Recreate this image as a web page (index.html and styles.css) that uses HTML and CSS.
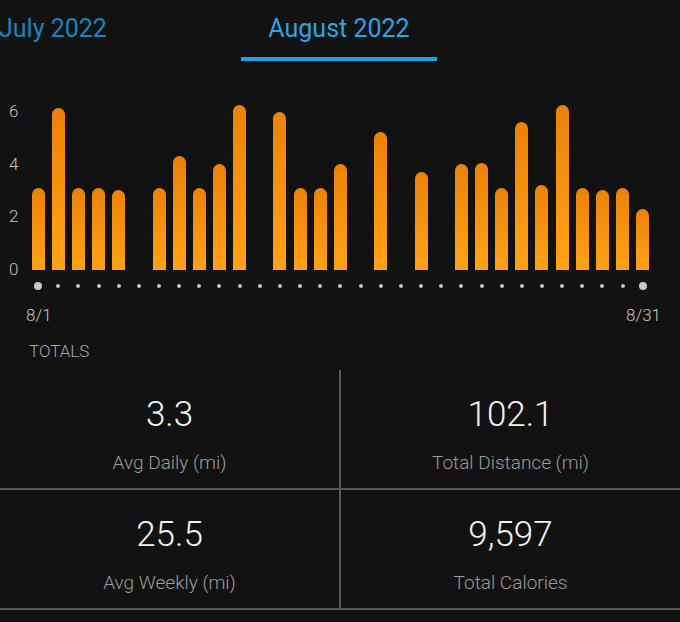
FILE: index.html
```html
<!DOCTYPE html>
<html>
<head>
<meta charset="utf-8">
<link rel="stylesheet" href="styles.css">
</head>
<body>
<div class="tabs">
  <div class="tab tab-prev">July 2022</div>
  <div class="tab tab-active">August 2022</div>
</div>
<div class="chart">
  <div class="y-axis"><span>6</span><span>4</span><span>2</span><span>0</span></div>
  <div class="plot">
    <div class="bars">
      <div class="slot"><div class="bar" style="height:82px"></div></div>
      <div class="slot"><div class="bar" style="height:162px"></div></div>
      <div class="slot"><div class="bar" style="height:82px"></div></div>
      <div class="slot"><div class="bar" style="height:82px"></div></div>
      <div class="slot"><div class="bar" style="height:80px"></div></div>
      <div class="slot"></div>
      <div class="slot"><div class="bar" style="height:82px"></div></div>
      <div class="slot"><div class="bar" style="height:114px"></div></div>
      <div class="slot"><div class="bar" style="height:82px"></div></div>
      <div class="slot"><div class="bar" style="height:106px"></div></div>
      <div class="slot"><div class="bar" style="height:165px"></div></div>
      <div class="slot"></div>
      <div class="slot"><div class="bar" style="height:158px"></div></div>
      <div class="slot"><div class="bar" style="height:82px"></div></div>
      <div class="slot"><div class="bar" style="height:82px"></div></div>
      <div class="slot"><div class="bar" style="height:106px"></div></div>
      <div class="slot"></div>
      <div class="slot"><div class="bar" style="height:138px"></div></div>
      <div class="slot"></div>
      <div class="slot"><div class="bar" style="height:98px"></div></div>
      <div class="slot"></div>
      <div class="slot"><div class="bar" style="height:106px"></div></div>
      <div class="slot"><div class="bar" style="height:107px"></div></div>
      <div class="slot"><div class="bar" style="height:82px"></div></div>
      <div class="slot"><div class="bar" style="height:148px"></div></div>
      <div class="slot"><div class="bar" style="height:85px"></div></div>
      <div class="slot"><div class="bar" style="height:165px"></div></div>
      <div class="slot"><div class="bar" style="height:82px"></div></div>
      <div class="slot"><div class="bar" style="height:80px"></div></div>
      <div class="slot"><div class="bar" style="height:82px"></div></div>
      <div class="slot"><div class="bar" style="height:61px"></div></div>
    </div>
    <div class="dots">
      <div class="slot"><span class="dot dot-end"></span></div>
      <div class="slot"><span class="dot"></span></div>
      <div class="slot"><span class="dot"></span></div>
      <div class="slot"><span class="dot"></span></div>
      <div class="slot"><span class="dot"></span></div>
      <div class="slot"><span class="dot"></span></div>
      <div class="slot"><span class="dot"></span></div>
      <div class="slot"><span class="dot"></span></div>
      <div class="slot"><span class="dot"></span></div>
      <div class="slot"><span class="dot"></span></div>
      <div class="slot"><span class="dot"></span></div>
      <div class="slot"><span class="dot"></span></div>
      <div class="slot"><span class="dot"></span></div>
      <div class="slot"><span class="dot"></span></div>
      <div class="slot"><span class="dot"></span></div>
      <div class="slot"><span class="dot"></span></div>
      <div class="slot"><span class="dot"></span></div>
      <div class="slot"><span class="dot"></span></div>
      <div class="slot"><span class="dot"></span></div>
      <div class="slot"><span class="dot"></span></div>
      <div class="slot"><span class="dot"></span></div>
      <div class="slot"><span class="dot"></span></div>
      <div class="slot"><span class="dot"></span></div>
      <div class="slot"><span class="dot"></span></div>
      <div class="slot"><span class="dot"></span></div>
      <div class="slot"><span class="dot"></span></div>
      <div class="slot"><span class="dot"></span></div>
      <div class="slot"><span class="dot"></span></div>
      <div class="slot"><span class="dot"></span></div>
      <div class="slot"><span class="dot"></span></div>
      <div class="slot"><span class="dot dot-end"></span></div>
    </div>
  </div>
</div>
<div class="range"><span>8/1</span><span>8/31</span></div>
<div class="section-title">TOTALS</div>
<div class="stats">
  <div class="stat stat-left">
    <div class="stat-value">3.3</div>
    <div class="stat-label">Avg Daily (mi)</div>
  </div>
  <div class="stat">
    <div class="stat-value">102.1</div>
    <div class="stat-label">Total Distance (mi)</div>
  </div>
  <div class="stat stat-left">
    <div class="stat-value">25.5</div>
    <div class="stat-label">Avg Weekly (mi)</div>
  </div>
  <div class="stat">
    <div class="stat-value">9,597</div>
    <div class="stat-label">Total Calories</div>
  </div>
</div>
</body>
</html>
```

FILE: styles.css
```css
html, body {
  margin: 0;
  padding: 0;
  background: #121212;
}
body {
  width: 680px;
  height: 622px;
  overflow: hidden;
  font-family: Roboto, "Noto Sans", "Liberation Sans", sans-serif;
  color: #bdbdbd;
}

/* Tabs */
.tabs {
  display: flex;
  height: 61px;
}
.tab {
  font-size: 25px;
  line-height: 30px;
  padding-top: 14px;
  box-sizing: border-box;
  height: 61px;
  white-space: nowrap;
}
.tab-prev {
  width: 242px;
  margin-left: -1px;
  color: #1c84bb;
}
.tab-active {
  width: 196px;
  text-align: center;
  color: #2aa6e2;
  border-bottom: 4px solid #1ea4e6;
}

/* Chart */
.chart {
  display: flex;
  margin-top: 39px;
}
.y-axis {
  width: 28px;
  height: 178px;
  margin-top: 1px;
  padding-left: 9px;
  box-sizing: border-box;
  display: flex;
  flex-direction: column;
  justify-content: space-between;
  font-size: 17px;
  line-height: 20px;
  font-weight: 300;
  color: #c2c2c2;
}
.plot {
  width: 625px;
}
.bars {
  display: flex;
  align-items: flex-end;
  height: 170px;
}
.slot {
  flex: 1;
  display: flex;
  justify-content: center;
}
.bars .slot {
  align-items: flex-end;
  height: 100%;
}
.bar {
  width: 13px;
  border-radius: 7px 7px 0 0;
  background: linear-gradient(to bottom, #ec8208, #ffa216);
}
.dots {
  display: flex;
  height: 8px;
  margin-top: 12px;
}
.dots .slot {
  align-items: center;
}
.dot {
  display: block;
  width: 4px;
  height: 4px;
  border-radius: 50%;
  background: #c4c4c4;
}
.dot-end {
  width: 8px;
  height: 8px;
  background: #c8c8c8;
}

.range {
  display: flex;
  justify-content: space-between;
  margin-top: 15px;
  padding: 0 19px 0 26px;
  font-size: 17px;
  line-height: 20px;
  font-weight: 300;
  color: #c2c2c2;
}

.section-title {
  margin-top: 16px;
  padding-left: 29px;
  font-size: 17px;
  line-height: 20px;
  font-weight: 300;
  color: #a8a8a8;
}

/* Stats grid */
.stats {
  display: grid;
  grid-template-columns: 341px 1fr;
  margin-top: 9px;
}
.stat {
  height: 120px;
  box-sizing: border-box;
  padding-top: 24px;
  border-bottom: 2px solid #5a5a5a;
  text-align: center;
}
.stat-left {
  border-right: 2px solid #5a5a5a;
}
.stat-value {
  font-size: 35px;
  line-height: 42px;
  font-weight: 300;
  color: #f2f2f2;
}
.stat-label {
  margin-top: 15px;
  font-size: 19px;
  line-height: 24px;
  font-weight: 300;
  color: #9c9c9c;
}
```
